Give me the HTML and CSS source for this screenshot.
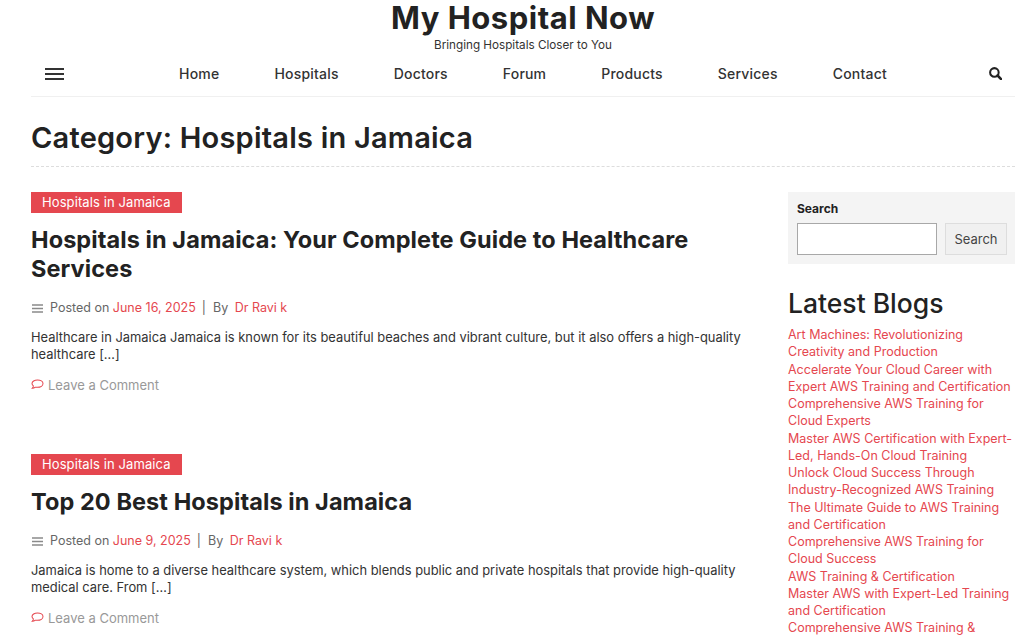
FILE: index.html
```html
<!DOCTYPE html>
<html lang="en">
<head>
    <meta charset="UTF-8">
    <meta name="viewport" content="width=device-width, initial-scale=1.0">
    <title>Hospitals in Jamaica - My Hospital Now</title>
    <link rel="stylesheet" href="styles.css">
</head>
<body>
    <header class="site-header">
        <div class="brand">
            <div class="site-title">My Hospital Now</div>
            <div class="tagline">Bringing Hospitals Closer to You</div>
        </div>
        <div class="nav-row">
            <div class="burger"><span></span><span></span><span></span></div>
            <nav class="menu">
                <a href="#">Home</a>
                <a href="#">Hospitals</a>
                <a href="#">Doctors</a>
                <a href="#">Forum</a>
                <a href="#">Products</a>
                <a href="#">Services</a>
                <a href="#">Contact</a>
            </nav>
            <svg class="search-icon" viewBox="0 0 14 14" width="13" height="13">
                <circle cx="5.8" cy="5.8" r="4.6" fill="none" stroke="#222" stroke-width="2.2"/>
                <path d="M9.2 9.2 L13 13" stroke="#222" stroke-width="2.8" stroke-linecap="round"/>
            </svg>
        </div>
    </header>

    <h1 class="page-title">Category: Hospitals in Jamaica</h1>

    <div class="content">
        <main class="posts">
            <article class="post">
                <a class="tag" href="#">Hospitals in Jamaica</a>
                <h2>Hospitals in Jamaica: Your Complete Guide to Healthcare Services</h2>
                <div class="meta">
                    <svg class="meta-icon" viewBox="0 0 11 9" width="11" height="9"><path d="M0 1h11M0 4.5h11M0 8h11" stroke="#8a8a8a" stroke-width="1.5"/></svg>
                    <span>Posted on <a href="#">June 16, 2025</a></span>
                    <span class="sep">|</span>
                    <span>By <a class="author" href="#">Dr Ravi k</a></span>
                </div>
                <p>Healthcare in Jamaica Jamaica is known for its beautiful beaches and vibrant culture, but it also offers a high-quality healthcare […]</p>
                <div class="comment">
                    <svg viewBox="0 0 14 12" width="13" height="11"><path d="M7 1C3.700 1 1 2.800 1 5c0 1 .6 1.900 1.500 2.600-.1.9-.6 1.900-1.200 2.600 1.300-.1 2.600-.7 3.400-1.300.7.1 1.500.2 2.300.2 3.300 0 6-1.800 6-4.100S10.300 1 7 1z" fill="none" stroke="#e5474f" stroke-width="1.1"/></svg>
                    <span>Leave a Comment</span>
                </div>
            </article>
            <article class="post">
                <a class="tag" href="#">Hospitals in Jamaica</a>
                <h2>Top 20 Best Hospitals in Jamaica</h2>
                <div class="meta">
                    <svg class="meta-icon" viewBox="0 0 11 9" width="11" height="9"><path d="M0 1h11M0 4.5h11M0 8h11" stroke="#8a8a8a" stroke-width="1.5"/></svg>
                    <span>Posted on <a href="#">June 9, 2025</a></span>
                    <span class="sep">|</span>
                    <span>By <a class="author" href="#">Dr Ravi k</a></span>
                </div>
                <p>Jamaica is home to a diverse healthcare system, which blends public and private hospitals that provide high-quality medical care. From […]</p>
                <div class="comment">
                    <svg viewBox="0 0 14 12" width="13" height="11"><path d="M7 1C3.700 1 1 2.800 1 5c0 1 .6 1.900 1.500 2.600-.1.9-.6 1.900-1.200 2.600 1.300-.1 2.600-.7 3.400-1.300.7.1 1.500.2 2.300.2 3.300 0 6-1.800 6-4.100S10.300 1 7 1z" fill="none" stroke="#e5474f" stroke-width="1.1"/></svg>
                    <span>Leave a Comment</span>
                </div>
            </article>
        </main>

        <aside class="sidebar">
            <form class="search-box">
                <label for="s">Search</label>
                <div class="search-row">
                    <input type="text" id="s">
                    <button type="button">Search</button>
                </div>
            </form>
            <h3>Latest Blogs</h3>
            <ul class="blog-list">
                <li><a href="#">Art Machines: Revolutionizing Creativity and Production</a></li>
                <li><a href="#">Accelerate Your Cloud Career with Expert AWS Training and Certification</a></li>
                <li><a href="#">Comprehensive AWS Training for Cloud Experts</a></li>
                <li><a href="#">Master AWS Certification with Expert-Led, Hands-On Cloud Training</a></li>
                <li><a href="#">Unlock Cloud Success Through Industry-Recognized AWS Training</a></li>
                <li><a href="#">The Ultimate Guide to AWS Training and Certification</a></li>
                <li><a href="#">Comprehensive AWS Training for Cloud Success</a></li>
                <li><a href="#">AWS Training &amp; Certification</a></li>
                <li><a href="#">Master AWS with Expert-Led Training and Certification</a></li>
                <li><a href="#">Comprehensive AWS Training &amp;</a></li>
            </ul>
        </aside>
    </div>
</body>
</html>
```

FILE: styles.css
```css
* {
    margin: 0;
    padding: 0;
    box-sizing: border-box;
}

html, body {
    height: 638px;
    overflow: hidden;
}

body {
    padding: 0 9px 0 31px;
    font-family: "Inter", "Liberation Sans", sans-serif;
    color: #222;
    background: #fff;
}

a {
    color: #e5474f;
    text-decoration: none;
}

.site-header {
    border-bottom: 1px solid #f0f0f0;
}

.brand {
    text-align: center;
    height: 58px;
}

.site-title {
    font-size: 31px;
    font-weight: 700;
    line-height: 36px;
    letter-spacing: 0.5px;
}

.tagline {
    margin-top: 1px;
    font-size: 11.700px;
    line-height: 16px;
    color: #333;
}

.nav-row {
    display: flex;
    align-items: center;
    height: 38px;
    padding: 0 14px 7px;
}

.burger {
    display: flex;
    flex-direction: column;
    gap: 3px;
    width: 19px;
}

.burger span {
    height: 2px;
    background: #333;
}

.menu {
    flex: 1;
    display: flex;
    justify-content: center;
    gap: 55px;
    padding-left: 13px;
}

.menu a {
    color: #333;
    font-size: 14px;
    font-weight: 500;
    letter-spacing: 0.2px;
}

.search-icon {
    margin-right: -1px;
}

.page-title {
    margin-top: 23px;
    padding-bottom: 10px;
    font-size: 29px;
    font-weight: 600;
    line-height: 36px;
    letter-spacing: 0.22px;
    border-bottom: 1px dashed #ddd;
}

.content {
    display: flex;
    justify-content: space-between;
    margin-top: 24px;
}

.posts {
    width: 725px;
}

.post {
    height: 262px;
}

.tag {
    display: inline-block;
    height: 21px;
    padding: 0 11px;
    background: #e5474f;
    color: #fff;
    font-size: 13px;
    line-height: 21px;
    letter-spacing: 0.1px;
}

.post h2 {
    margin-top: 12px;
    font-size: 23.500px;
    font-weight: 700;
    line-height: 29px;
    letter-spacing: 0.08px;
}

.meta {
    display: flex;
    align-items: center;
    gap: 6px;
    margin-top: 16px;
    font-size: 12.500px;
    line-height: 18px;
    color: #666;
}

.meta-icon {
    margin: 0 1px 0 1px;
}

.meta .sep {
    margin-right: 1px;
}

.meta .author {
    margin-left: 3px;
}

.post p {
    margin-top: 12px;
    font-size: 12.900px;
    line-height: 17.250px;
    color: #333;
}

.comment {
    display: flex;
    align-items: center;
    gap: 4px;
    margin-top: 12px;
    font-size: 13px;
    line-height: 18px;
    color: #999;
}

.sidebar {
    width: 227px;
    margin-top: 1px;
}

.search-box {
    display: block;
    height: 72px;
    padding: 9px 8px 0 9px;
    background: #f4f4f4;
}

.search-box label {
    display: block;
    font-size: 12px;
    font-weight: 700;
    line-height: 16px;
}

.search-row {
    display: flex;
    justify-content: space-between;
    margin-top: 6px;
}

.search-row input {
    width: 140px;
    height: 32px;
    border: 1px solid #a8a8a8;
    background: #fff;
}

.search-row button {
    width: 62px;
    height: 32px;
    border: 1px solid #ddd;
    background: #f0f0f0;
    color: #444;
    font-family: inherit;
    font-size: 13px;
}

.sidebar h3 {
    margin-top: 21px;
    font-size: 26.500px;
    font-weight: 500;
    line-height: 36px;
}

.blog-list {
    list-style: none;
    margin-top: 5px;
    font-size: 12.500px;
    line-height: 17.250px;
}
```
